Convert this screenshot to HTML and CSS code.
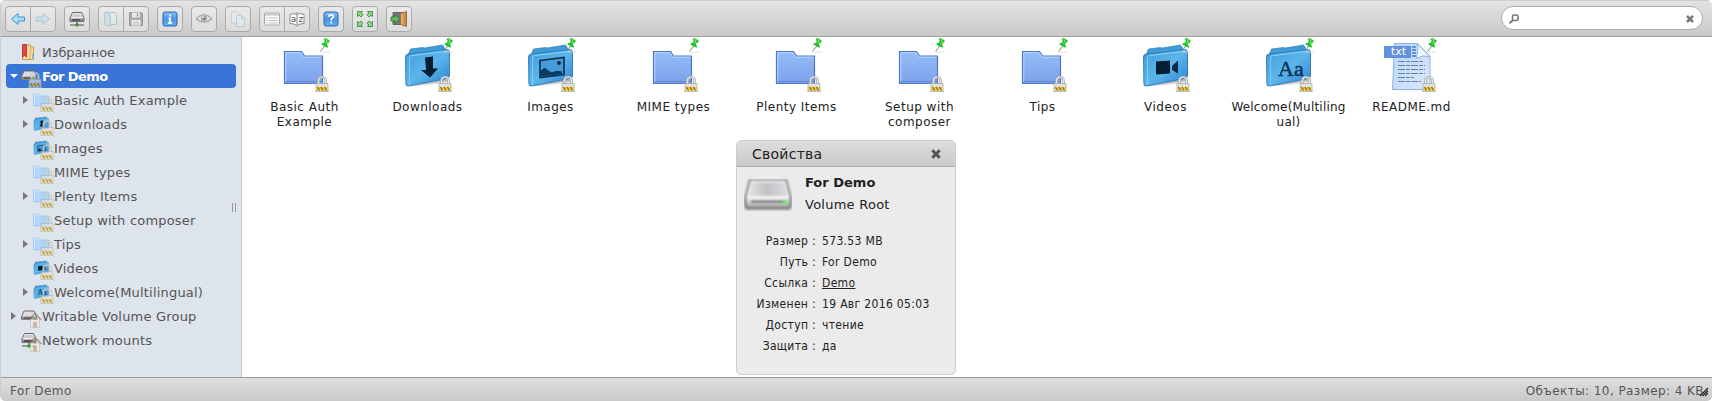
FILE: index.html
```html
<!DOCTYPE html>
<html lang="ru">
<head>
<meta charset="utf-8">
<title>For Demo</title>
<link rel="stylesheet" href="styles.css">
</head>
<body>
<svg class="defs" width="0" height="0" aria-hidden="true">
<defs>
<linearGradient id="gFolder" x1="0" y1="0" x2="0" y2="1"><stop offset="0" stop-color="#96bdf8"/><stop offset="1" stop-color="#7ba1ea"/></linearGradient>
<linearGradient id="gBox" x1="0" y1="0" x2="1" y2="1"><stop offset="0" stop-color="#3f9bdb"/><stop offset=".5" stop-color="#5cb6ec"/><stop offset="1" stop-color="#2b83cb"/></linearGradient>
<linearGradient id="gDrive" x1="0" y1="0" x2="1" y2="0"><stop offset="0" stop-color="#e4e4e4"/><stop offset=".45" stop-color="#c2c2c2"/><stop offset="1" stop-color="#dcdae6"/></linearGradient>
<linearGradient id="gDriveF" x1="0" y1="0" x2="0" y2="1"><stop offset="0" stop-color="#fafafa"/><stop offset="1" stop-color="#b4b4b4"/></linearGradient>
<linearGradient id="gBlue" x1="0" y1="0" x2="0" y2="1"><stop offset="0" stop-color="#8cc0f2"/><stop offset=".5" stop-color="#4a93e0"/><stop offset="1" stop-color="#62b4f4"/></linearGradient>
<linearGradient id="gDoc" x1="0" y1="0" x2="1" y2="1"><stop offset="0" stop-color="#b9d6f7"/><stop offset="1" stop-color="#d8e8fb"/></linearGradient>
<linearGradient id="gDoor" x1="0" y1="0" x2="1" y2="0"><stop offset="0" stop-color="#e8bd85"/><stop offset="1" stop-color="#c07d3b"/></linearGradient>
<filter id="soft" x="-10%" y="-10%" width="120%" height="130%"><feGaussianBlur stdDeviation=".8"/></filter>

<symbol id="lock" viewBox="0 0 14 16"><path d="M3.500 8V4.500a3.500 3.500 0 0 1 7 0V8" fill="none" stroke="#a4aaa8" stroke-width="2.600"/><path d="M3.500 8V4.500a3.500 3.500 0 0 1 7 0V8" fill="none" stroke="#e4e8e6" stroke-width="1.200"/><path d="M1 7.500h12v8H1z" fill="#dfe1e0" stroke="#a9adaa" stroke-width=".8"/><path d="M1.500 11h11v3.500h-11z" fill="#fbc81e"/><path d="M2.500 11l2 3.500M6 11l2 3.500M9.500 11l2 3.500" stroke="#6c6650" stroke-width="1.100"/><path d="M0 15.500h14" stroke="#b9bcb8"/></symbol>
<symbol id="pin" viewBox="0 0 12 16"><path d="M5.800 9L1.500 14.500" stroke="#858a85"/><path d="M2 15h9" stroke="#d8d8d8" stroke-width=".8"/><path d="M4.600 2.200L6.300.800l4.400 2.800-.5 1.900-1.800.3-.2 2.500 1 1.200-.9 1.300-6-3.200.5-1.400 1.700-.2 1.300-2z" fill="#25c12a"/><path d="M6 2l2 1.500-1.500 3" fill="none" stroke="#84ed7c"/></symbol>
<symbol id="folder" viewBox="0 0 48 48"><path d="M3 41h41" stroke="#a7a7a7" stroke-width="2" filter="url(#soft)"/><path d="M4.500 8.500h17l3 4.500h18v27.500h-38z" fill="url(#gFolder)" stroke="#4c77cd" stroke-width="1.200"/><path d="M5.800 39V9.700h15l3 4.500h17.500" fill="none" stroke="#b9d4fd" stroke-width="1"/><path d="M6 38.500h35.500" stroke="#6488d4"/></symbol>
<symbol id="box" viewBox="0 0 48 48"><path d="M4 42l42-5" stroke="#889" stroke-width="2" filter="url(#soft)"/><path d="M5.500 11l2-5 12-1.500L21.500 5l18-3 2 3 .5 8L6.500 17z" fill="#3f9cd6" stroke="#2d7db7" stroke-width=".7"/><path d="M2.500 15q-.5-4 3-4l38-4.500q3 0 3 3V32q0 3-2 3.400L5.500 43q-3 .5-2.600-3z" fill="url(#gBox)" stroke="#2a78b5" stroke-width=".9"/><path d="M6.500 42V15q0-2 2-2.300l36-4.600" fill="none" stroke="#7dccf6" stroke-width="1.200"/></symbol>
<symbol id="m-down" viewBox="0 0 48 48"><path d="M22 14.500l8-1v12h5L27 34.500l-9-7.500h5z" fill="#061d33"/></symbol>
<symbol id="m-image" viewBox="0 0 48 48"><path d="M14 17.500l24-3v17l-24 3z" fill="#459cd8" stroke="#0d2f4d" stroke-width="1.600"/><path d="M15 27.500q4-5 7 0l4 2q4-3 10-1v2.500l-21 2.500z" fill="#0b3b63"/><circle cx="33" cy="20" r="2" fill="#0d2f4d"/></symbol>
<symbol id="m-video" viewBox="0 0 48 48"><path d="M15 18.500l14-1v13l-14 1z" fill="#061d33"/><path d="M31 23l6-5.500v13L31 27z" fill="#0b2b47"/></symbol>
<symbol id="m-font" viewBox="0 0 48 48"><text x="14" y="33" font-family="Liberation Serif, serif" font-size="22" stroke="#0a3354" stroke-width=".5" fill="#0a3354">Aa</text></symbol>
<symbol id="drive" viewBox="0 0 48 32"><g filter="url(#soft)"><path d="M5 0h38l5 19v7q0 5-4 5H4q-4 0-4-5v-7z" fill="#8d8d8d"/><path d="M7.500 2.500h33l4 15.500h-41z" fill="url(#gDrive)" stroke="#f6f6f6" stroke-width="1.500"/><path d="M3 18h42v6q0 3-2.500 3h-37Q3 27 3 24z" fill="url(#gDriveF)"/><path d="M7 22.500h33" stroke="#555" stroke-width="2"/><circle cx="41" cy="22.500" r="2.200" fill="#52e94f"/></g></symbol>
<symbol id="sdrive" viewBox="0 0 16 12"><path d="M3 1h10l2.500 5.500v3H.5v-3z" fill="#dedede" stroke="#6e6e6e"/><path d="M1 6.500h14v3H1z" fill="#999"/><path d="M2.500 8h8" stroke="#333"/><path d="M12 8h2" stroke="#44d94c"/></symbol>
<symbol id="house" viewBox="0 0 14 16"><path d="M2.500 7h9v8.500h-9z" fill="#f5eee7" stroke="#b5aaa0" stroke-width=".7"/><path d="M.5 8L7 1.500 13.500 8" fill="none" stroke="#8b6c63" stroke-width="1.300"/><path d="M5 10h4v5.500H5z" fill="#c59b6b"/><path d="M6 6h2v2H6z" fill="#a9a3a3"/></symbol>
<symbol id="sfolder" viewBox="0 0 16 16"><path d="M.5 2h6l1.500 2h7.500v10H.5z" fill="#b2d5fb" stroke="#9fc6f1" stroke-width=".8"/><path d="M1.500 13V3H6" fill="none" stroke="#d2e7fd"/></symbol>
<symbol id="netdrive" viewBox="0 0 16 16"><path d="M3.500 1.500h9L15 7v3.500H1V7z" fill="#eee" stroke="#666"/><path d="M1 7.500h14v3H1z" fill="#888"/><path d="M3 9h8" stroke="#222"/><path d="M4 3h8l1 3H3z" fill="#ccc"/><path d="M8 11v2M1 14h14" stroke="#555" stroke-width="1.200"/><circle cx="8" cy="14" r="1.700" fill="#26a52d"/></symbol>
</defs>
</svg>

<div class="finder">
  <header class="toolbar">
    <div class="group">
      <span class="btn"><svg width="16" height="16"><path d="M1.500 8L8 2.500V6h6.500v4H8v3.500z" fill="#a9ddf5" stroke="#3c97cb"/></svg></span>
      <span class="btn off"><svg width="16" height="16"><path d="M14.500 8L8 2.500V6H1.500v4H8v3.500z" fill="#a9ddf5" stroke="#3c97cb"/></svg></span>
    </div>
    <div class="group"><span class="btn"><svg width="16" height="16"><use href="#netdrive"/></svg></span></div>
    <div class="group">
      <span class="btn off"><svg width="16" height="16"><path d="M2 1.500h6v12H2z" fill="#d9ebf6" stroke="#5596bd"/><path d="M2 1.500l5 2v12l-5-2z" fill="#b5d8ec" stroke="#5596bd"/><path d="M8 1.500h4l1.500 2v10H8" fill="#e3f1f9" stroke="#5596bd"/></svg></span>
      <span class="btn mid"><svg width="16" height="16"><path d="M1.500 1.500h12l1 1v12h-13z" fill="#858585" stroke="#666"/><path d="M4 1.500h8v5H4z" fill="#eee"/><path d="M9.500 2.500v3" stroke="#666" stroke-width="1.500"/><path d="M3.500 9h9v5.500h-9z" fill="#f5f5f5"/><path d="M5 11h6M5 13h6" stroke="#aaa"/></svg></span>
    </div>
    <div class="group"><span class="btn"><svg width="16" height="16"><rect x="1" y="1" width="14" height="14" rx="2" fill="url(#gBlue)" stroke="#2a66b3"/><path d="M8 3.500v2M6.500 7.500H8V12M6 12.200h4" stroke="#fff" stroke-width="1.800" fill="none"/></svg></span></div>
    <div class="group"><span class="btn mid"><svg width="16" height="16"><path d="M.5 8Q8-.5 15.500 8 8 14.500.5 8z" fill="#eee" stroke="#777" stroke-width="1.200"/><circle cx="8" cy="7.500" r="3.200" fill="#888"/><circle cx="8" cy="7.500" r="1.500" fill="#333"/><circle cx="7" cy="6.500" r="1" fill="#fff"/></svg></span></div>
    <div class="group"><span class="btn off"><svg width="16" height="16"><path d="M1.500 1h6l2 2v9h-8z" fill="#eaf3fa" stroke="#89acc4"/><path d="M6.500 4.500h5l3 3v8h-8z" fill="#e2f1fa" stroke="#76a5c2"/><path d="M11.500 4.500v3h3" fill="none" stroke="#76a5c2"/></svg></span></div>
    <div class="group">
      <span class="btn"><svg width="16" height="16"><rect x=".5" y="2" width="15" height="12" rx="1" fill="#fafafa" stroke="#a6a6a6"/><path d="M1 3.500h14" stroke="#c9c9c9" stroke-width="2"/><path d="M2.500 7h1M2.500 9.500h1M2.500 12h1" stroke="#87a987"/><path d="M5 7h8.500M5 9.500h8.500M5 12h8.500" stroke="#c4c4c4"/></svg></span>
      <span class="btn"><svg width="16" height="16"><path d="M1 3.500q4-2 7 0 3-2 7 0v9q-4 0-7 2-3-2-7-2z" fill="#fff" stroke="#888"/><path d="M8 1v14.500" stroke="#aaa" stroke-width="1.500"/><text class="az" x="1.800" y="10.500">a</text><text class="az" x="9.400" y="10.500">z</text></svg></span>
    </div>
    <div class="group"><span class="btn"><svg width="16" height="16"><rect x="1" y="1" width="14" height="14" rx="2" fill="url(#gBlue)" stroke="#2a66b3"/><path d="M5.800 5.800q0-2 2.300-2t2.300 1.800q0 1-1.200 1.700T8.200 9.500M8.200 10.800v1.700" stroke="#fff" stroke-width="1.700" fill="none"/></svg></span></div>
    <div class="group"><span class="btn"><svg width="16" height="16" fill="#8fd783" stroke="#3f8d43" stroke-width=".9"><path d="M.5.500H5.500L4.200 2 6 3.800 4 6 2.200 4.200.5 5.500z"/><path d="M15.500.500H10.500L11.800 2 10 3.800 12 6l1.800-1.800 1.700 1.300z"/><path d="M.5 15.500H5.500L4.200 14 6 12.200 4 10l-1.800 1.800L.5 10.500z"/><path d="M15.500 15.500H10.500l1.300-1.500-1.800-1.800L12 10l1.800 1.800 1.700-1.300z"/></svg></span></div>
    <div class="group"><span class="btn"><svg width="16" height="16"><path d="M2 1.500h13v12H2z" fill="#777" stroke="#666"/><path d="M9.500 2.500l6-2v15l-6-2z" fill="url(#gDoor)" stroke="#a66c32"/><path d="M0 6h4V3.500L9 8l-5 4.500V10H0z" fill="#69b867" stroke="#2f7735" stroke-width=".9"/></svg></span></div>
    <div class="search">
      <svg width="10" height="10"><rect x="3.500" y="1" width="5.500" height="5.500" rx="1.500" fill="none" stroke="#777" stroke-width="1.600"/><path d="M3.500 6.500L.5 9.300" stroke="#777" stroke-width="2"/></svg>
      <svg width="8" height="8"><path d="M1 1l6 6M7 1L1 7" stroke="#777" stroke-width="2.500"/></svg>
    </div>
  </header>

  <main class="work">
    <nav class="tree">
      <div class="row"><span class="arrow"></span><span class="ico"><svg width="14" height="16"><path d="M2.500 1h7v2h3v12.500h-11z" fill="#f3dc9a" stroke="#c99c50"/><path d="M1.500.500h4V13l-2-1.500-2 1.500z" fill="#e84545" stroke="#b52b2b" stroke-width=".8"/><path d="M10 3l-1.500 12" stroke="#d9b468"/><path d="M12 10v4" stroke="#5bb5d9" stroke-width="1.500"/></svg></span><span class="name fav">Избранное</span></div>
      <div class="row active"><span class="arrow open"></span><span class="ico"><svg class="dr" width="16" height="12"><use href="#sdrive"/></svg><svg class="badge"><use href="#lock"/></svg></span><span class="name">For Demo</span></div>
      <div class="row sub"><span class="arrow closed"></span><span class="ico"><svg width="16" height="16"><use href="#sfolder"/></svg><svg class="badge"><use href="#lock"/></svg></span><span class="name">Basic Auth Example</span></div>
      <div class="row sub"><span class="arrow closed"></span><span class="ico"><svg width="16" height="16"><use href="#box"/><use href="#m-down"/></svg><svg class="badge"><use href="#lock"/></svg></span><span class="name">Downloads</span></div>
      <div class="row sub"><span class="arrow"></span><span class="ico"><svg width="16" height="16"><use href="#box"/><use href="#m-image"/></svg><svg class="badge"><use href="#lock"/></svg></span><span class="name">Images</span></div>
      <div class="row sub"><span class="arrow"></span><span class="ico"><svg width="16" height="16"><use href="#sfolder"/></svg><svg class="badge"><use href="#lock"/></svg></span><span class="name">MIME types</span></div>
      <div class="row sub"><span class="arrow closed"></span><span class="ico"><svg width="16" height="16"><use href="#sfolder"/></svg><svg class="badge"><use href="#lock"/></svg></span><span class="name">Plenty Items</span></div>
      <div class="row sub"><span class="arrow"></span><span class="ico"><svg width="16" height="16"><use href="#sfolder"/></svg><svg class="badge"><use href="#lock"/></svg></span><span class="name">Setup with composer</span></div>
      <div class="row sub"><span class="arrow closed"></span><span class="ico"><svg width="16" height="16"><use href="#sfolder"/></svg><svg class="badge"><use href="#lock"/></svg></span><span class="name">Tips</span></div>
      <div class="row sub"><span class="arrow"></span><span class="ico"><svg width="16" height="16"><use href="#box"/><use href="#m-video"/></svg><svg class="badge"><use href="#lock"/></svg></span><span class="name">Videos</span></div>
      <div class="row sub"><span class="arrow closed"></span><span class="ico"><svg width="16" height="16"><use href="#box"/><use href="#m-font"/></svg><svg class="badge"><use href="#lock"/></svg></span><span class="name">Welcome(Multilingual)</span></div>
      <div class="row"><span class="arrow closed"></span><span class="ico"><svg class="dr" width="16" height="12"><use href="#sdrive"/></svg><svg class="badge"><use href="#house"/></svg></span><span class="name">Writable Volume Group</span></div>
      <div class="row"><span class="arrow"></span><span class="ico"><svg width="16" height="16"><use href="#netdrive"/></svg><svg class="badge"><use href="#house"/></svg></span><span class="name">Network mounts</span></div>
      <span class="grip"></span>
    </nav>

    <section class="files">
      <div class="file"><div class="pic"><svg width="48" height="48"><use href="#folder"/></svg><svg class="pin"><use href="#pin"/></svg><svg class="lock"><use href="#lock"/></svg></div><p>Basic Auth<br>Example</p></div>
      <div class="file"><div class="pic"><svg width="48" height="48"><use href="#box"/><use href="#m-down"/></svg><svg class="pin"><use href="#pin"/></svg><svg class="lock"><use href="#lock"/></svg></div><p>Downloads</p></div>
      <div class="file"><div class="pic"><svg width="48" height="48"><use href="#box"/><use href="#m-image"/></svg><svg class="pin"><use href="#pin"/></svg><svg class="lock"><use href="#lock"/></svg></div><p>Images</p></div>
      <div class="file"><div class="pic"><svg width="48" height="48"><use href="#folder"/></svg><svg class="pin"><use href="#pin"/></svg><svg class="lock"><use href="#lock"/></svg></div><p>MIME types</p></div>
      <div class="file"><div class="pic"><svg width="48" height="48"><use href="#folder"/></svg><svg class="pin"><use href="#pin"/></svg><svg class="lock"><use href="#lock"/></svg></div><p>Plenty Items</p></div>
      <div class="file"><div class="pic"><svg width="48" height="48"><use href="#folder"/></svg><svg class="pin"><use href="#pin"/></svg><svg class="lock"><use href="#lock"/></svg></div><p>Setup with<br>composer</p></div>
      <div class="file"><div class="pic"><svg width="48" height="48"><use href="#folder"/></svg><svg class="pin"><use href="#pin"/></svg><svg class="lock"><use href="#lock"/></svg></div><p>Tips</p></div>
      <div class="file"><div class="pic"><svg width="48" height="48"><use href="#box"/><use href="#m-video"/></svg><svg class="pin"><use href="#pin"/></svg><svg class="lock"><use href="#lock"/></svg></div><p>Videos</p></div>
      <div class="file"><div class="pic"><svg width="48" height="48"><use href="#box"/><use href="#m-font"/></svg><svg class="pin"><use href="#pin"/></svg><svg class="lock"><use href="#lock"/></svg></div><p class="tight">Welcome(Multiling<br>ual)</p></div>
      <div class="file"><div class="pic"><svg width="48" height="48"><path d="M7.500.500h23L43 13v33.500H5.500z" fill="url(#gDoc)" stroke="#91b3e4"/><path d="M30 .5q2 6-1 15 7-4 14-2z" fill="#f4f9ff" stroke="#91b3e4"/><path d="M11 18.500h25M11 22.500h27M11 26.500h27M11 30.500h27M11 34.500h16M11 38.500h23" stroke="#6a81a6" stroke-dasharray="7 1 4 1"/><path d="M-3 3h27v12H-3z" fill="#6291dd"/><path d="M25 4h4M25 7h4M25 10h4M25 13h4" stroke="#6291dd" stroke-width="2"/><text class="ext" x="4" y="12">txt</text></svg><svg class="pin"><use href="#pin"/></svg><svg class="lock"><use href="#lock"/></svg></div><p>README.md</p></div>
    </section>
  </main>

  <footer class="status"><span>For Demo</span><span class="count">Объекты: 10, Размер: 4 KB</span>
    <svg class="resize" width="8" height="8"><path d="M0 8L8 0M2.500 8L8 2.500M5 8l3-3" stroke="#222" stroke-width="1.100"/></svg>
  </footer>
</div>

<aside class="dialog">
  <div class="dialog-head"><span>Свойства</span><svg width="10" height="10"><path d="M1.300 1.300l7.400 7.400M8.700 1.300L1.300 8.700" stroke="#555" stroke-width="3"/></svg></div>
  <div class="summary"><svg width="48" height="32"><use href="#drive"/></svg><div><b>For Demo</b><span>Volume Root</span></div></div>
  <dl class="props">
    <dt>Размер :</dt><dd>573.53 MB</dd>
    <dt>Путь :</dt><dd>For Demo</dd>
    <dt>Ссылка :</dt><dd><u>Demo</u></dd>
    <dt>Изменен :</dt><dd>19 Авг 2016 05:03</dd>
    <dt>Доступ :</dt><dd>чтение</dd>
    <dt>Защита :</dt><dd>да</dd>
  </dl>
</aside>
</body>
</html>
```
FILE: styles.css
```css
* { box-sizing: border-box; }
body { margin: 0; background: #fff; font-family: Verdana, "DejaVu Sans", sans-serif; color: #222; overflow: hidden; }
svg { display: block; flex: none; overflow: visible; }
.defs { position: absolute; }
.finder { height: 401px; display: flex; flex-direction: column; border-left: 1px solid #ccc; border-radius: 5px; overflow: hidden; }

.toolbar { height: 37px; flex: none; display: flex; align-items: flex-start; gap: 8px; padding: 5px 9px 0 4px; border-top: 1px solid #ccc; border-bottom: 1px solid #a0a0a0; background: linear-gradient(#e3e3e3, #c9c9c9); }
.group { display: flex; height: 26px; border: 1px solid #aaa; border-radius: 4px; background: linear-gradient(#e9e9e9, #dcdcdc); }
.btn { width: 24px; display: flex; align-items: center; justify-content: center; }
.btn + .btn { width: 25px; border-left: 1px solid #aaa; }
.off svg { opacity: .35; }
.mid svg { opacity: .6; }
.az { font: 9px "DejaVu Sans", sans-serif; fill: #555; }
.search { width: 202px; height: 24px; margin-left: auto; padding: 2px 8px 0 7px; display: flex; align-items: center; justify-content: space-between; border: 1px solid #aaa; border-radius: 12px; background: #fff; }

.work { flex: 1; min-height: 0; display: flex; }
.tree { width: 241px; flex: none; padding: 3px 5px 0; position: relative; background: #dde4eb; border-right: 1px solid #ccc; }
.row { height: 24px; display: flex; align-items: center; border-radius: 4px; color: #555; font-size: 13px; letter-spacing: .2px; white-space: nowrap; }
.fav { letter-spacing: -.1px; }
.sub { padding-left: 12px; }
.active { color: #fff; background: #3875d7; font-weight: bold; letter-spacing: -.6px; }
.arrow { width: 15px; padding-left: 5px; flex: none; }
.arrow::before { content: ""; display: none; }
.closed::before { display: block; width: 0; border-left: 5px solid #777; border-top: 4px solid transparent; border-bottom: 4px solid transparent; }
.open::before { display: block; width: 0; margin-left: -1px; border-top: 4px solid #fff; border-left: 4px solid transparent; border-right: 4px solid transparent; }
.ico { width: 21px; height: 16px; flex: none; position: relative; }
.dr { margin-top: 2px; }
.badge { position: absolute; left: 7px; top: 4px; width: 14px; height: 16px; opacity: .65; }
.grip { position: absolute; left: 231px; top: 166px; width: 4px; height: 9px; border: solid #999; border-width: 0 1px; }

.files { flex: 1; display: flex; padding-left: 1px; }
.file { width: 123px; flex: none; padding-top: 6px; text-align: center; }
.pic { width: 48px; height: 48px; margin-left: 37px; position: relative; }
.pin { position: absolute; left: 39px; top: -6px; width: 12px; height: 16px; }
.lock { position: absolute; left: 35px; top: 33px; width: 14px; height: 16px; }
.ext { font: 11px "DejaVu Sans", sans-serif; fill: #fff; }
.file p { margin: 9px 0 0; font-size: 12px; line-height: 15px; letter-spacing: .48px; }
.file .tight { letter-spacing: .2px; }

.status { height: 24px; flex: none; position: relative; display: flex; justify-content: space-between; align-items: center; padding: 2px 8px 0 9px; border-top: 1px solid #999; background: linear-gradient(#dfdfdf, #c9c9c9); color: #555; font-size: 12px; letter-spacing: .43px; }
.resize { position: absolute; right: 4px; bottom: 5px; }

.dialog { position: absolute; left: 736px; top: 140px; width: 220px; height: 235px; border: 1px solid #ccc; border-radius: 5px; background: #ebebeb; overflow: hidden; }
.dialog-head { height: 26px; display: flex; align-items: center; justify-content: space-between; padding: 0 14px 0 15px; border-bottom: 1px solid #aaa; background: linear-gradient(#dedede, #c9c9c9); font-size: 14px; letter-spacing: .25px; }
.summary { display: flex; gap: 13px; padding: 5px 0 0 7px; font-size: 13px; }
.summary svg { margin-top: 7px; }
.summary b, .summary span { display: block; line-height: 22px; }
.summary span { letter-spacing: .25px; }
.props { display: grid; grid-template-columns: 79px auto; column-gap: 6px; margin: 15px 0 0; font: 12px/21px Tahoma, "DejaVu Sans Condensed", "DejaVu Sans", sans-serif; letter-spacing: .33px; }
.props dt { text-align: right; white-space: nowrap; }
.props dd { margin: 0; white-space: nowrap; }
```
